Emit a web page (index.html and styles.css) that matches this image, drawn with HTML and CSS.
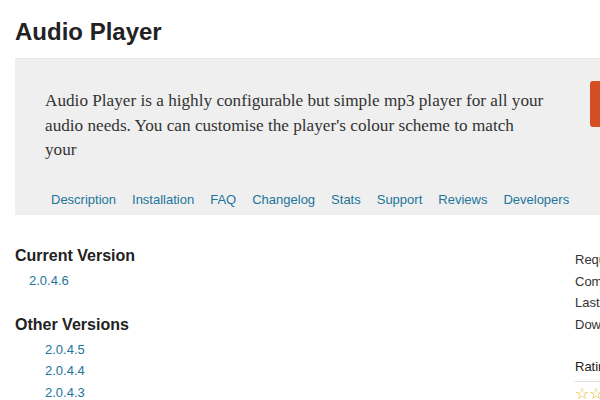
FILE: index.html
```html
<!DOCTYPE html>
<html>
<head>
<meta charset="utf-8">
<link rel="stylesheet" href="styles.css">
</head>
<body>
<div class="page">
  <h1 class="title">Audio Player</h1>
  <div class="header">
    <div class="header-top">
      <p class="desc">Audio Player is a highly configurable but simple mp3 player for all your audio needs. You can customise the player's colour scheme to match your</p>
      <a class="download">Download Version 2.0.4.6</a>
    </div>
    <nav class="tabs">
      <a>Description</a><a>Installation</a><a>FAQ</a><a>Changelog</a><a>Stats</a><a>Support</a><a>Reviews</a><a>Developers</a>
    </nav>
  </div>
  <div class="body">
    <div class="main">
      <h3 class="sec">Current Version</h3>
      <ul class="cur"><li>2.0.4.6</li></ul>
      <h3 class="sec">Other Versions</h3>
      <ul class="other"><li>2.0.4.5</li><li>2.0.4.4</li><li>2.0.4.3</li><li>2.0.4.2</li></ul>
    </div>
    <div class="side">
      <ul class="meta">
        <li>Requires: 2.0 or higher</li>
        <li>Compatible up to: 3.3.2</li>
        <li>Last Updated: 2012-2-5</li>
        <li>Downloads: 1,542,873</li>
      </ul>
      <h4 class="rat">Ratings</h4>
      <div class="stars"><span>☆</span><span>☆</span><span>☆</span><span>☆</span><span>☆</span></div>
    </div>
  </div>
</div>
</body>
</html>
```
FILE: styles.css
```css
html, body { margin: 0; padding: 0; background: #fff; overflow: hidden; }
body { width: 600px; height: 400px; }
.page { width: 960px; padding-left: 15px; font-family: "Liberation Sans", Arial, sans-serif; color: #333; }
.title { margin: 0; padding-top: 19px; height: 39px; font-size: 24px; line-height: 26px; font-weight: bold; color: #222; }
.header { background: #efefef; padding: 0 0 0 30px; height: 157px; box-sizing: border-box; border-top: 1px solid #e6e6e6; }
.header-top { display: flex; align-items: flex-start; padding-top: 22px; height: 106px; box-sizing: border-box; }
.desc { margin: 8px 0 0 0; width: 503px; flex: none; font-family: "Liberation Serif", "Times New Roman", serif; font-size: 17.2px; line-height: 24.5px; color: #333; }
.download { display: block; flex: none; margin-left: 42px; background: #d54e21; color: #fff; height: 46px; line-height: 46px; padding: 0 16px; border-radius: 3px; font-size: 14px; white-space: nowrap; }
.tabs { display: flex; padding-top: 27px; margin-left: -1px; }
.tabs a { color: #21759b; font-size: 13px; line-height: 16px; padding: 0 8px; }
.tabs a:first-child { padding-left: 7px; }
.body { display: flex; padding-top: 31px; }
.main { width: 560px; }
.sec { margin: 0; font-size: 16px; line-height: 20px; font-weight: bold; color: #222; }
ul { list-style: none; margin: 0; padding: 0; }
.cur { padding: 4px 0 23px 14px; }
.cur li, .other li { color: #21759b; font-size: 13px; line-height: 21.5px; }
.other { padding: 4px 0 0 30px; }
.side { width: 300px; }
.meta li { font-size: 13px; line-height: 21.5px; color: #333; }
.meta { padding-top: 3px; }
.rat { margin: 24px 0 0 0; font-size: 13px; line-height: 16px; font-weight: normal; color: #222; padding-bottom: 6px; border-bottom: 1px solid #ddd; width: 260px; }
.stars { color: #e8b923; font-size: 16px; line-height: 16px; padding-top: 4px; }
```
